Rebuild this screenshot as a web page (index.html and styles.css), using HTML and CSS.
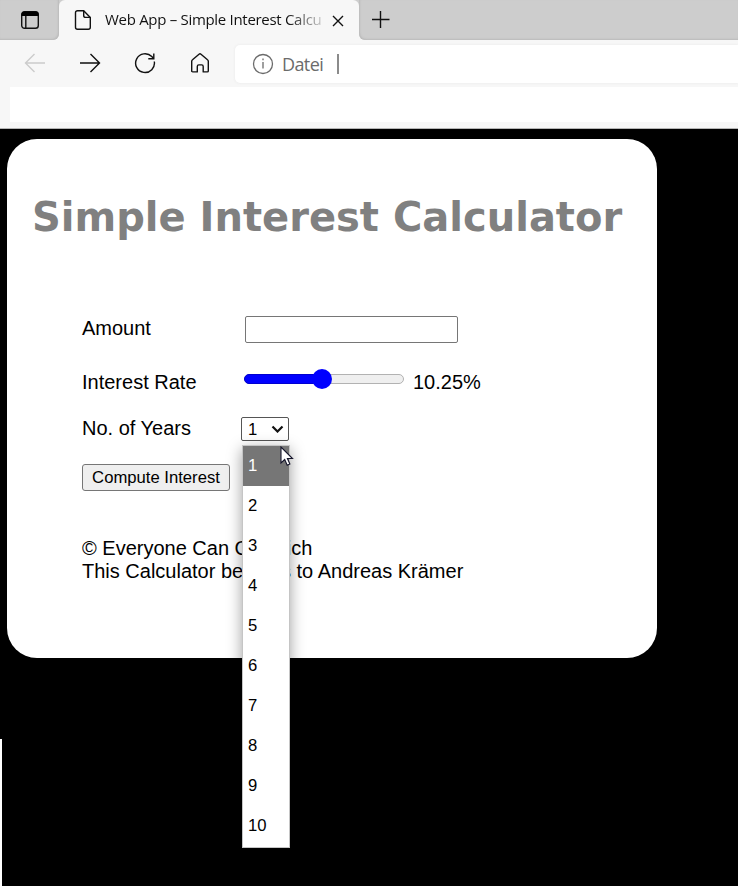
FILE: index.html
```html
<!DOCTYPE html>
<html lang="en">
<head>
<meta charset="utf-8">
<title>Web App – Simple Interest Calculator</title>
<link rel="stylesheet" href="styles.css">
</head>
<body>
<header class="browser">
  <div class="tabstrip">
    <div class="strip-left">
      <svg width="20" height="20" viewBox="0 0 20 20"><rect x="1.7" y="1.7" width="16.6" height="16.6" rx="2.8" fill="none" stroke="#111" stroke-width="1.4"/><path d="M1.500 6V4.500a3 3 0 0 1 3-3h11a3 3 0 0 1 3 3V6z" fill="#000"/><path d="M5.800 6v12" stroke="#111" stroke-width="1.4"/></svg>
    </div>
    <div class="tab">
      <svg class="page-icon" width="18" height="22" viewBox="0 0 18 22" fill="none" stroke="#111" stroke-width="1.4" stroke-linejoin="round"><path d="M9.700 1.700H3.500a2 2 0 0 0-2 2v14.600a2 2 0 0 0 2 2h10.800a2 2 0 0 0 2-2V8.400z"/><path d="M9.700 1.700v4.700a2 2 0 0 0 2 2h4.600"/></svg>
      <span class="tab-title">Web App – Simple Interest Calcu</span>
      <svg class="close" width="12" height="12" viewBox="0 0 12 12"><path d="M1 1l10 10M11 1L1 11" stroke="#111" stroke-width="1.4"/></svg>
    </div>
    <div class="strip-right">
      <svg width="18" height="18" viewBox="0 0 18 18"><path d="M8.500 0v17M0 8.500h17.500" stroke="#111" stroke-width="1.4"/></svg>
    </div>
  </div>
  <div class="toolbar">
    <svg class="nav" width="22" height="22" viewBox="0 0 22 22" fill="none" stroke="#ccc" stroke-width="1.4"><path d="M21 11H1.500M10.500 2L1.500 11l9 9"/></svg>
    <svg class="nav" width="22" height="22" viewBox="0 0 22 22" fill="none" stroke="#111" stroke-width="1.4"><path d="M1 11h19.500M11.500 2l9 9-9 9"/></svg>
    <svg class="nav" width="22" height="22" viewBox="0 0 22 22" fill="none" stroke="#111" stroke-width="1.4"><path d="M20.300 9.500A9.400 9.400 0 1 1 17.800 4.600L19.500 6.500"/><path d="M19.800 1.500v5.200h-5.500"/></svg>
    <svg class="nav" width="22" height="22" viewBox="0 0 22 22" fill="none" stroke="#111" stroke-width="1.4" stroke-linejoin="round"><path d="M2.700 9.300c0-.7.300-1.200.8-1.600L10 2.200c.6-.5 1.400-.5 2 0l6.500 5.500c.5.400.8.900.8 1.600v9.600c0 .6-.4 1-1 1h-4.100v-5.400c0-1-.6-1.600-1.500-1.600h-2.900c-.9 0-1.500.6-1.500 1.600v5.400H3.700c-.6 0-1-.4-1-1z"/></svg>
    <div class="address">
      <svg width="22" height="22" viewBox="0 0 22 22" fill="none" stroke="#6b6b6b" stroke-width="1.3"><circle cx="11" cy="11" r="9.500"/><path d="M11 9v6.500M11 5.600v1.700"/></svg>
      <span class="scheme">Datei</span><span class="divider"></span>
    </div>
  </div>
  <div class="bookmarks"></div>
</header>
<main class="page">
  <section class="card">
    <h1>Simple Interest Calculator</h1>
    <div class="row amount"><label>Amount</label><div class="field"></div></div>
    <div class="row rate"><label>Interest Rate</label>
      <div class="slider"><div class="fill"></div><div class="thumb"></div></div>
      <span class="percent">10.25%</span>
    </div>
    <div class="row years"><label>No. of Years</label>
      <div class="select"><span>1</span>
        <svg width="13" height="8" viewBox="0 0 13 8"><path d="M1.500 1.500l5 5 5-5" fill="none" stroke="#111" stroke-width="2.200"/></svg>
        <div class="menu">
          <div class="option active">1</div><div class="option">2</div><div class="option">3</div><div class="option">4</div><div class="option">5</div><div class="option">6</div><div class="option">7</div><div class="option">8</div><div class="option">9</div><div class="option">10</div>
          <svg class="pointer" width="14" height="21" viewBox="0 0 14 21"><path d="M1 1v16l3.700-3.500 2.500 5.700 2.700-1.200-2.500-5.500h5.100z" fill="#fff" stroke="#15152b" stroke-width="1.100"/></svg>
        </div>
      </div>
    </div>
    <button class="compute">Compute Interest</button>
    <footer>© Everyone Can Get Rich<br>This Calculator belongs to Andreas Krämer</footer>
  </section>
  <div class="edge"></div>
</main>
</body>
</html>
```
FILE: styles.css
```css
* { box-sizing: border-box; }
body { margin: 0; background: #000; color: #000; font: 20px/23px "Liberation Sans", Arial, sans-serif; overflow: hidden; }
svg { display: block; flex: none; }
.browser { height: 129px; background: #f7f7f7; border-bottom: 1px solid #b5b5b5; }
.tabstrip { display: flex; height: 40px; background: linear-gradient(#cdcdcd 10px, #f7f7f7 10px); }
.strip-left { width: 59px; height: 40px; padding: 10px 0 0 20px; background: #cdcdcd; border-radius: 0 0 6px 0; box-shadow: inset -1px -1px 2px #bababa; }
.strip-right { flex: 1; height: 40px; padding: 11px 0 0 13px; background: #cdcdcd; border-radius: 0 0 0 6px; box-shadow: inset 1px -1px 2px #bababa; }
.tab { display: flex; width: 300px; padding: 9px 0 0 15px; background: #f7f7f7; border-radius: 6px 6px 0 0; }
.tab-title { width: 217px; margin: -1px 0 0 13px; height: 22px; overflow: hidden; white-space: nowrap; font: 15px/22px "Open Sans", sans-serif; letter-spacing: -0.3px; background: linear-gradient(90deg, #111 84%, #ccc 100%); background-clip: text; color: transparent; }
.close { margin: 6px 0 0 10px; }
.toolbar { display: flex; align-items: center; height: 47px; padding: 0 0 1px 24px; }
.nav { margin-right: 33px; }
.address { display: flex; align-items: center; flex: 1; height: 38px; margin: 1px 0 0 -9px; padding-left: 17px; background: #fff; border-radius: 5px 0 0 5px; box-shadow: 0 0 3px #e8e8e8; }
.scheme { margin-left: 8px; color: #6b6b6b; font: 18px/24px "Open Sans", sans-serif; letter-spacing: -0.6px; }
.divider { width: 2px; height: 20px; margin-left: 14px; background: #8b8b8b; }
.bookmarks { height: 35px; margin-left: 10px; background: #fff; }
.page { display: flow-root; position: relative; height: 757px; }
.card { width: 650px; height: 519px; margin: 10px 0 0 7px; padding: 54px 25px 0; background: #fff; border-radius: 30px; }
h1 { margin: 0; color: #808080; font: bold 40px/48px "DejaVu Sans", Verdana, sans-serif; white-space: nowrap; }
.row { display: flex; align-items: flex-start; margin-left: 50px; }
.row label { width: 163px; flex: none; }
.amount { height: 54px; margin-top: 75px; padding-top: 1px; }
.field { width: 213px; height: 27px; margin-top: -1px; border: 1px solid #767676; border-radius: 2px; }
.rate { height: 46px; padding-top: 1px; }
.slider { display: flex; align-items: center; width: 160px; height: 10px; margin: 3px 9px 0 -1px; background: #efefef; border: 1px solid #b2b2b2; border-radius: 5px; }
.fill { width: 72px; height: 10px; margin-left: -1px; background: #00f; border: 1px solid #0000d0; border-radius: 5px 0 0 5px; }
.thumb { width: 20px; height: 20px; margin-left: -4px; border-radius: 50%; background: #00f; flex: none; }
.years { height: 48px; padding-top: 1px; }
.select { position: relative; display: flex; align-items: center; justify-content: space-between; width: 48px; height: 24px; margin-left: -4px; padding: 0 4px 0 6px; border: 1px solid #555; border-radius: 2px; font-size: 16.667px; }
.menu { position: absolute; left: 0; top: 27px; width: 48px; height: 403px; background: #fff; border: 1px solid #c5c5c5; box-shadow: 0 4px 14px rgba(0,0,0,.38); }
.option { height: 40px; padding-left: 5px; line-height: 39px; }
.active { background: #767676; color: #fff; }
.pointer { position: absolute; left: 37px; top: 0; }
.compute { display: block; width: 148px; height: 27px; margin: 0 0 0 50px; padding: 0; border: 1px solid #767676; border-radius: 3px; background: #efefef; color: #000; font: 16.667px "Liberation Sans", Arial, sans-serif; }
footer { margin: 46px 0 0 50px; }
.edge { position: absolute; left: 0; bottom: 0; width: 2px; height: 147px; background: #fff; }
```
